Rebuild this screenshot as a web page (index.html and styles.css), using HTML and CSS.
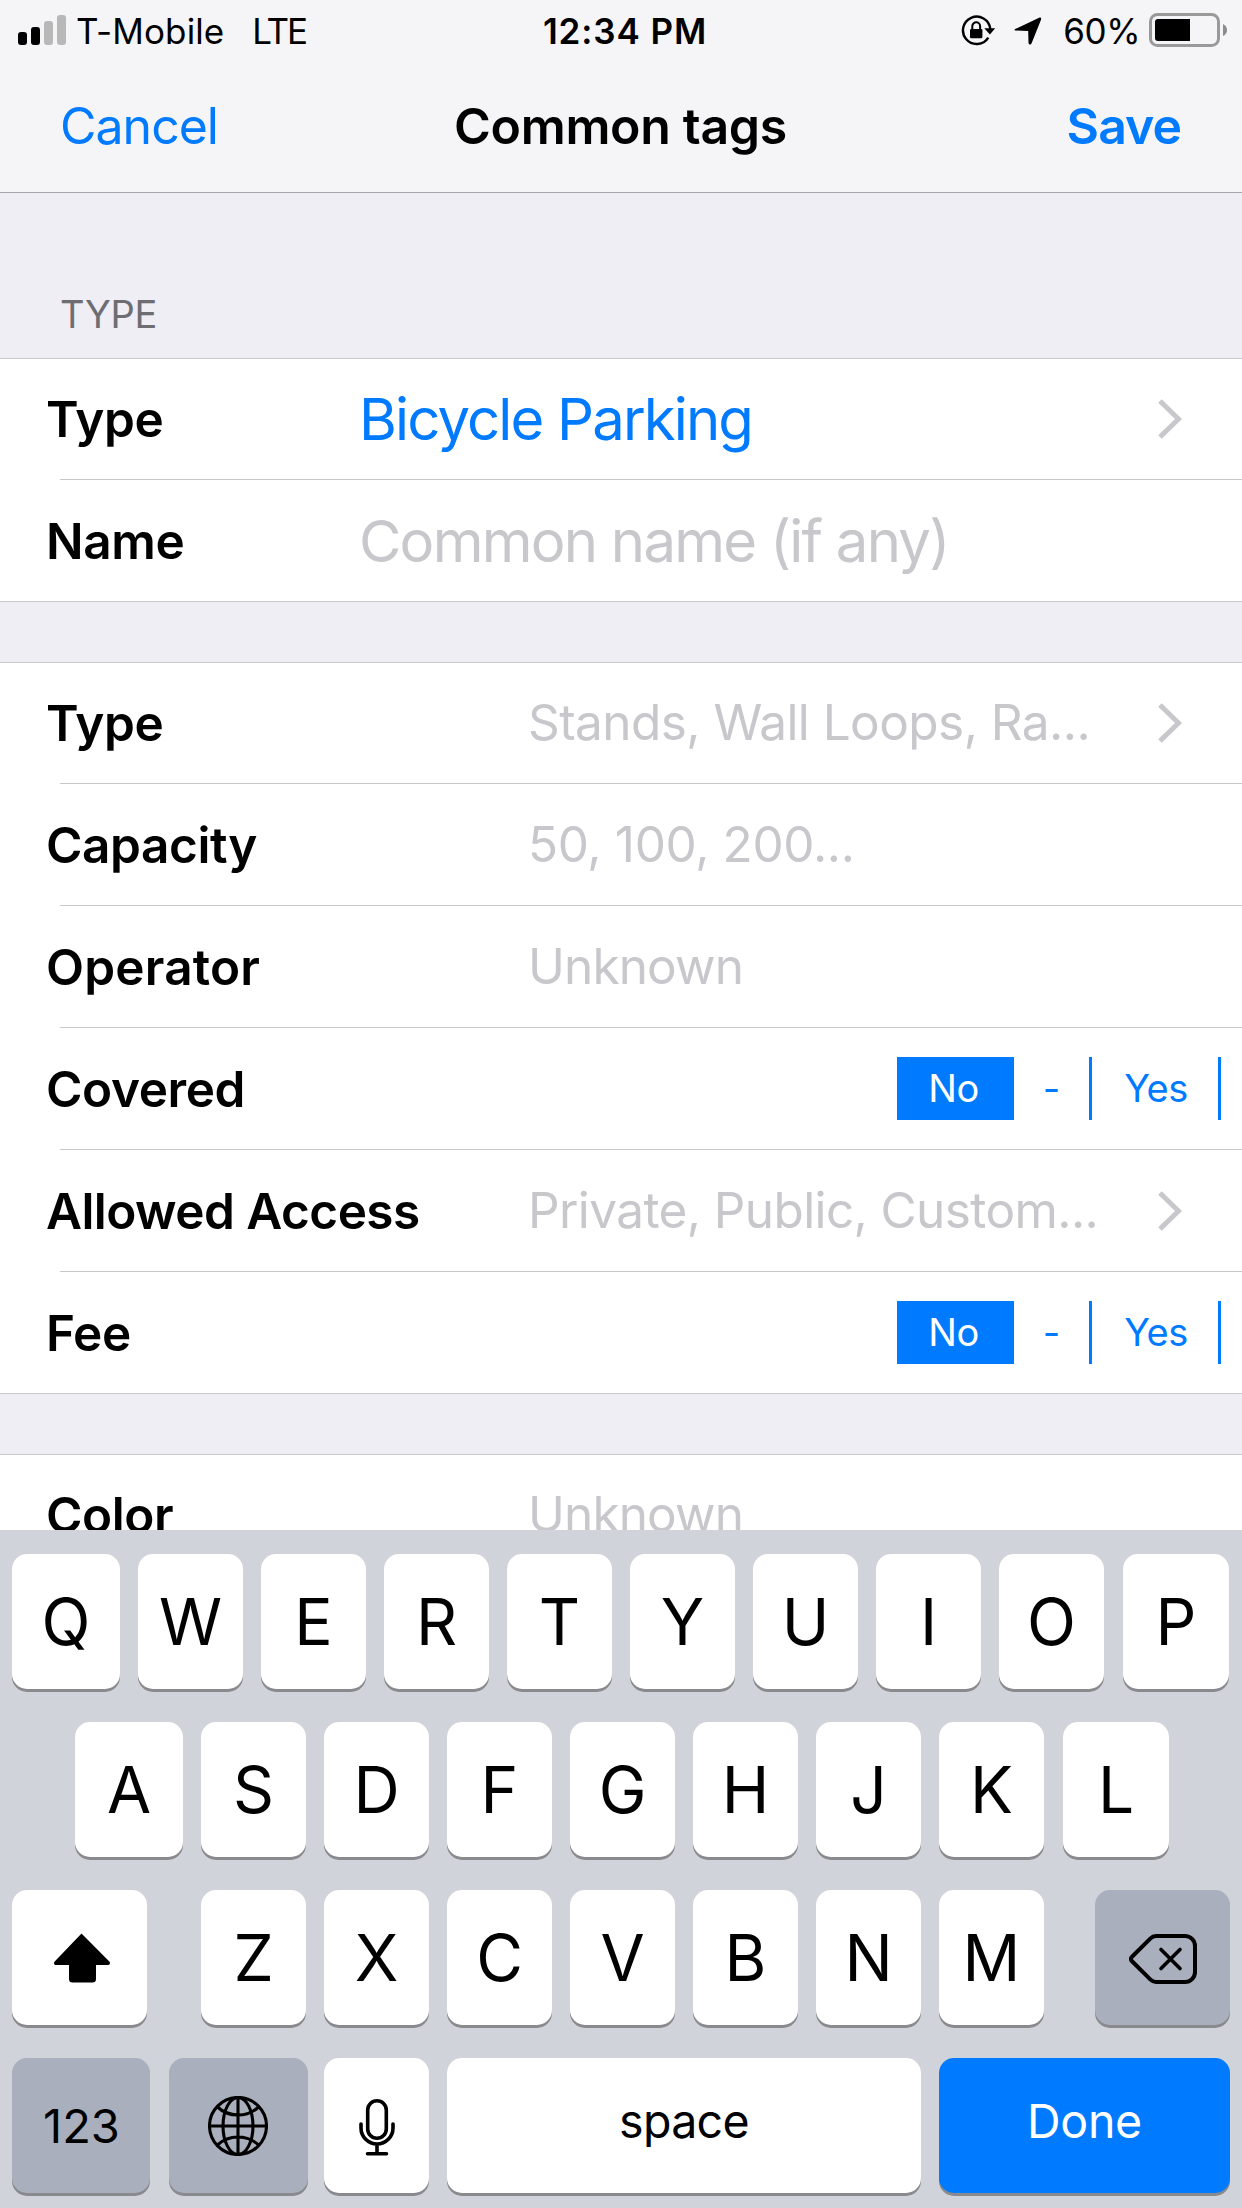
FILE: index.html
```html
<!DOCTYPE html>
<html lang="en">
<head>
<meta charset="utf-8">
<title>Common tags</title>
<link rel="stylesheet" href="styles.css">
</head>
<body>
<div class="screen">
  <header class="header">
    <div class="status">
      <div class="status-left">
        <svg class="signal" viewBox="0 0 48 30" width="48" height="30"><rect x="0" y="17" width="9" height="13" rx="3"/><rect x="13" y="12" width="9" height="18" rx="3"/><rect class="weak" x="26" y="6" width="9" height="24" rx="3"/><rect class="weak" x="39" y="0" width="9" height="30" rx="3"/></svg>
        <span class="carrier">T-Mobile</span>
        <span class="network">LTE</span>
      </div>
      <div class="clock">12:34 PM</div>
      <div class="status-right">
        <svg class="lock" viewBox="0 0 35 32" width="35" height="32"><path d="M27.3 22.6A13.7 13.7 0 1 1 29.3 13.8" fill="none" stroke="#000" stroke-width="2.4"/><path d="M23.3 13.3H34.2L28.9 19.4Z"/><rect x="9" y="14" width="12.4" height="9.3" rx="1.2"/><path d="M11.3 15V11.2a3.9 3.9 0 0 1 7.8 0V15" fill="none" stroke="#000" stroke-width="2"/></svg>
        <svg class="location" viewBox="0 0 28 28" width="28" height="28"><path d="M1.2 12 25.1.8c1.5-.6 2.5.4 1.9 1.9L17.6 26.3c-.7 1.8-3 1.6-3.1-.6L14.2 13.9 1.9 13.6C.3 13.5 0 12.6 1.2 12Z"/></svg>
        <span class="percent">60%</span>
        <svg class="battery" viewBox="0 0 78 34" width="78" height="34"><rect x="1.5" y="1.5" width="68" height="31" rx="7" fill="none" stroke="#999" stroke-width="3"/><path d="M9 6H41V28H9a3 3 0 0 1-3-3V9a3 3 0 0 1 3-3Z"/><path d="M74 11Q78 13 78 17T74 23Z" fill="#8b8b8b"/></svg>
      </div>
    </div>
    <nav class="nav">
      <a class="cancel">Cancel</a>
      <h1 class="title">Common tags</h1>
      <a class="save">Save</a>
    </nav>
  </header>

  <main class="form">
    <h2 class="section-title">TYPE</h2>
    <section class="group wide">
      <div class="row"><span class="label">Type</span><span class="value link">Bicycle Parking</span><svg class="chevron" viewBox="0 0 24 40" width="24" height="40"><path d="M2 2 20.5 20 2 38"/></svg></div>
      <div class="row"><span class="label">Name</span><span class="value">Common name (if any)</span></div>
    </section>
    <section class="group">
      <div class="row"><span class="label">Type</span><span class="value">Stands, Wall Loops, Ra...</span><svg class="chevron" viewBox="0 0 24 40" width="24" height="40"><path d="M2 2 20.5 20 2 38"/></svg></div>
      <div class="row"><span class="label">Capacity</span><span class="value v-capacity">50, 100, 200...</span></div>
      <div class="row"><span class="label l-operator">Operator</span><span class="value v-unknown">Unknown</span></div>
      <div class="row"><span class="label">Covered</span><div class="segments"><span class="seg no">No</span><span class="seg dash">-</span><span class="seg yes">Yes</span></div></div>
      <div class="row"><span class="label l-access">Allowed Access</span><span class="value v-access">Private, Public, Custom...</span><svg class="chevron" viewBox="0 0 24 40" width="24" height="40"><path d="M2 2 20.5 20 2 38"/></svg></div>
      <div class="row"><span class="label">Fee</span><div class="segments"><span class="seg no">No</span><span class="seg dash">-</span><span class="seg yes">Yes</span></div></div>
    </section>
    <section class="group">
      <div class="row"><span class="label">Color</span><span class="value v-unknown">Unknown</span></div>
    </section>
  </main>

  <div class="keyboard">
    <div class="keys row-top"><b>Q</b><b>W</b><b>E</b><b>R</b><b>T</b><b>Y</b><b>U</b><b>I</b><b>O</b><b class="edge">P</b></div>
    <div class="keys row-home"><b>A</b><b>S</b><b>D</b><b>F</b><b>G</b><b>H</b><b>J</b><b>K</b><b class="edge">L</b></div>
    <div class="keys row-shift">
      <b class="shift"><svg viewBox="0 0 58 50" width="58" height="50"><path d="M28.5.6 56.3 28.4c1.4 1.5.5 3.6-1.4 3.6H43V46a3.6 3.6 0 0 1-3.6 3.6H19.6A3.6 3.6 0 0 1 16 46V32H3.1c-1.9 0-2.8-2.1-1.4-3.6Z"/></svg></b>
      <i></i><b>Z</b><b>X</b><b>C</b><b>V</b><b>B</b><b>N</b><b>M</b><i></i>
      <b class="dark backspace"><svg viewBox="0 0 68 50" width="68" height="50" class="line"><path d="M27 2H56a10 10 0 0 1 10 10V38a10 10 0 0 1-10 10H27a8 8 0 0 1-5.500-2.300L2.800 27a2.800 2.800 0 0 1 0-4L21.500 4.300A8 8 0 0 1 27 2Z"/><path d="M32 15.500 51 34.500M51 15.500 32 34.500" stroke-width="3.600"/></svg></b>
    </div>
    <div class="keys row-bottom">
      <b class="dark num">123</b>
      <b class="dark globe"><svg viewBox="0 0 60 60" width="60" height="60" class="line"><circle cx="30" cy="30" r="28.500"/><ellipse cx="30" cy="30" rx="15" ry="28.500"/><path d="M30 1.400V58.600M1.400 30H58.600M9.500 11Q18 19 30 19T50.500 11M9.500 49Q18 41 30 41T50.500 49"/></svg></b>
      <b class="mic"><svg viewBox="0 0 36 57" width="36" height="57" class="line"><rect x="8.700" y="1.800" width="18.600" height="37.500" rx="9.300"/><path d="M2 25V29a16 16 0 0 0 32 0V25M18 45V54M8.500 54.800H27.500"/></svg></b>
      <b class="space">space</b>
      <b class="done">Done</b>
    </div>
  </div>
</div>
</body>
</html>
```
FILE: styles.css
```css
* { box-sizing: border-box; }

body {
  margin: 0;
  background: #efeef4;
  color: #000;
  font-family: Inter, "Liberation Sans", sans-serif;
}

.screen {
  display: flex;
  flex-direction: column;
  width: 1242px;
  height: 2208px;
  overflow: hidden;
}

.header {
  flex: none;
  height: 193px;
  background: #f5f5f7;
  border-bottom: 1px solid #a7a7aa;
}

.status {
  display: grid;
  grid-template-columns: 1fr auto 1fr;
  align-items: center;
  height: 60px;
  padding: 3px 15px 0 18px;
  font-size: 35px;
  line-height: 57px;
}

.status-left, .status-right { display: flex; align-items: center; white-space: nowrap; }
.status-right { justify-content: flex-end; }
.signal { margin-right: 10px; margin-top: -3px; }
.weak { fill: #b8b8b8; }
.carrier { letter-spacing: 0.1px; }
.network { margin-left: 28px; letter-spacing: -2.2px; }
.clock { padding-left: 5px; font-weight: 600; letter-spacing: 0.9px; }
.lock { margin: -2px 18px 0 0; }
.location { margin: -1px 21px 0 0; }
.percent { letter-spacing: -0.5px; }
.battery { margin: -3px 0 0 9px; }

.nav {
  display: grid;
  grid-template-columns: 1fr auto 1fr;
  height: 132px;
  padding: 0 61px 0 60px;
  font-size: 50px;
  line-height: 132px;
}

.cancel, .save, .link { color: #007aff; }
.cancel { letter-spacing: -1px; }
.title { margin: 0; font-size: inherit; font-weight: 600; letter-spacing: -0.3px; }
.save { font-weight: 600; text-align: right; letter-spacing: -1px; }

.form { height: 1337px; overflow: hidden; }

.section-title {
  height: 165px;
  margin: 0;
  padding: 98px 0 0 60px;
  color: #6d6d72;
  font-size: 38px;
  font-weight: 400;
  letter-spacing: -0.3px;
  line-height: 47px;
}

.group {
  margin-bottom: 60px;
  background: #fff;
  border-top: 1px solid #c8c7cc;
  border-bottom: 1px solid #c8c7cc;
}

.row {
  display: flex;
  align-items: center;
  height: 122px;
  padding: 1px 0 0 46px;
  background: linear-gradient(#c8c7cc, #c8c7cc) 60px 0 / 100% 1px no-repeat;
}
.row:first-child { height: 120px; padding-top: 0; background: none; }

.label {
  flex: none;
  width: 482px;
  font-size: 49.5px;
  font-weight: 600;
  letter-spacing: -0.4px;
  white-space: nowrap;
}
.l-operator { letter-spacing: 0.2px; }
.l-access { letter-spacing: -0.55px; }

.value {
  flex: 1;
  padding-bottom: 2px;
  color: #c7c7cc;
  font-size: 49.5px;
  letter-spacing: -0.55px;
  white-space: nowrap;
}
.v-capacity { letter-spacing: -0.35px; }
.v-unknown { letter-spacing: -0.85px; }
.v-access { letter-spacing: -0.6px; }
.value.link { color: #007aff; }
.wide .label { width: 313px; }
.wide .value { padding-bottom: 0; font-size: 58px; letter-spacing: -1.75px; }
.wide .link { letter-spacing: -1.85px; }

.chevron { margin-right: 60px; fill: none; stroke: #c7c7cc; stroke-width: 5; }

.segments { display: flex; margin-left: auto; padding-right: 21px; color: #007aff; font-size: 38px; line-height: 63px; }
.seg { height: 63px; text-align: center; }
.no { width: 117px; padding-right: 4px; background: #007aff; color: #fff; letter-spacing: -0.5px; }
.dash { width: 78px; border-right: 3px solid #007aff; }
.yes { width: 129px; padding-left: 2px; border-right: 3px solid #007aff; letter-spacing: -0.6px; }

.keyboard {
  flex: none;
  display: flex;
  flex-direction: column;
  gap: 33px;
  height: 678px;
  padding: 24px 12px 15px;
  background: #d0d3da;
}

.keys { display: grid; gap: 18px; height: 135px; }
.keys b {
  display: flex;
  align-items: center;
  justify-content: center;
  height: 135px;
  background: #fff;
  border-radius: 15px;
  box-shadow: 0 3px 0 #898a8d;
  font-size: 64px;
  font-weight: 400;
}
.row-top { grid-template-columns: 108px repeat(8, 105px) 108px; }
.row-home { grid-template-columns: 108px repeat(7, 105px) 108px; padding-left: 63px; }
.row-shift { grid-template-columns: 135px 18px repeat(7, 105px) 15px 135px; }
.row-bottom { grid-template-columns: 138px 138px 105px 474px 291px; }

.keys .edge { margin: 0 1px; }
.keys .dark { background: #a9afbc; }
.keys .shift { padding: 1px 0 0 4px; }
.keys .globe { margin: 0 -2px 0 1px; padding-right: 2px; }
.line { fill: none; stroke: #000; stroke-width: 3.1; stroke-linecap: round; stroke-linejoin: round; }
.backspace { padding: 2px 0 0 1px; }
.backspace .line { stroke-width: 4; }
.mic .line { stroke-width: 3.6; }
.mic { padding-top: 3px; }
.keys .num { padding-left: 1px; font-size: 47px; }
.keys .space, .keys .done { padding-bottom: 9px; font-size: 46.5px; }
.keys .space { letter-spacing: -0.7px; }
.keys .done { background: #007aff; color: #fff; letter-spacing: -0.3px; }
```
